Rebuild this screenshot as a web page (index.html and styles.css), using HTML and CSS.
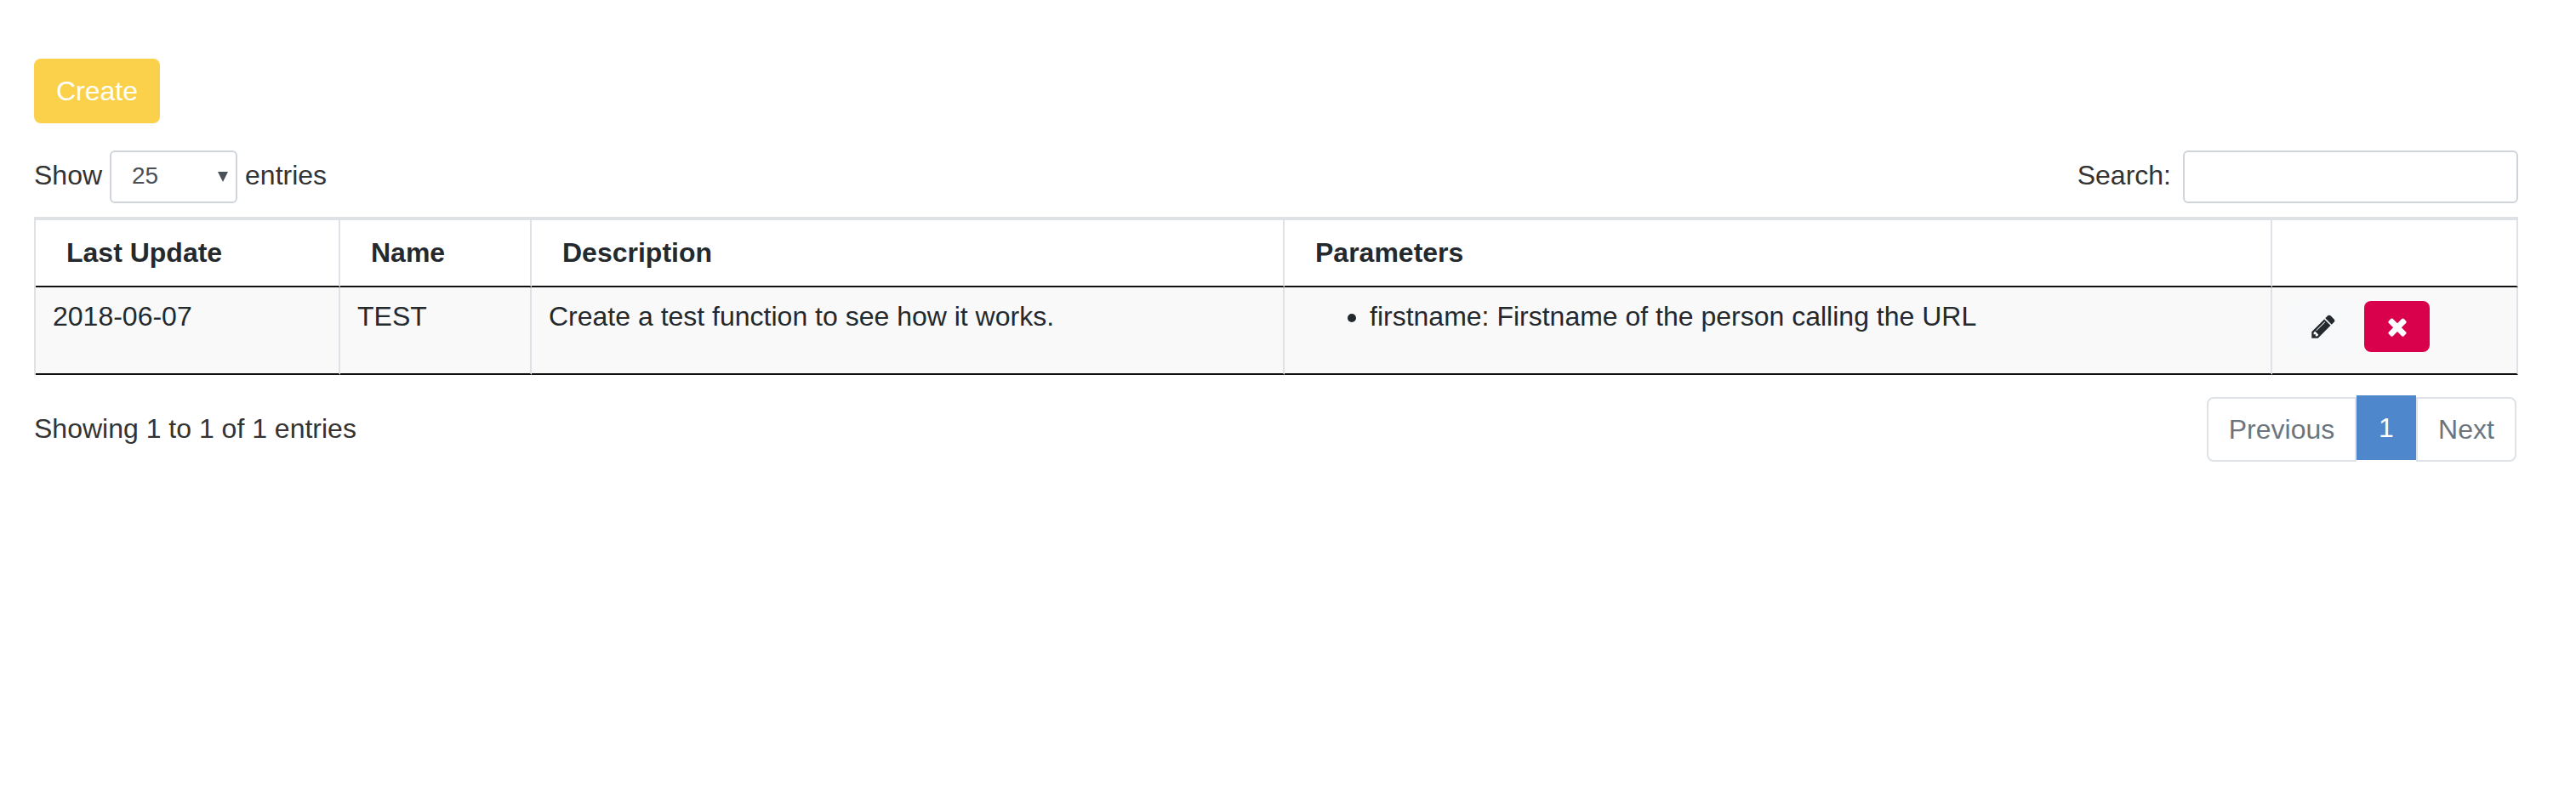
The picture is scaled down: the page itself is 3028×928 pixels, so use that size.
FILE: index.html
```html
<!DOCTYPE html>
<html lang="en">
<head>
<meta charset="utf-8">
<title>Functions</title>
<link rel="stylesheet" href="styles.css">
</head>
<body>
<main class="page">
  <button class="btn btn-create" type="button">Create</button>
  <div class="toolbar">
    <label class="length">Show
      <span class="select">25<svg class="caret" viewBox="0 0 12 12"><path d="M0 0h12L6 12z"/></svg></span>
      entries</label>
    <label class="search">Search:<input class="search-input" type="text"></label>
  </div>
  <table class="grid">
    <colgroup><col class="c-date"><col class="c-name"><col class="c-desc"><col class="c-params"><col class="c-actions"></colgroup>
    <thead>
      <tr><th>Last Update</th><th>Name</th><th>Description</th><th>Parameters</th><th></th></tr>
    </thead>
    <tbody>
      <tr>
        <td>2018-06-07</td>
        <td>TEST</td>
        <td>Create a test function to see how it works.</td>
        <td><ul class="params"><li>firstname: Firstname of the person calling the URL</li></ul></td>
        <td>
          <div class="actions">
            <button class="btn-icon btn-edit" type="button" aria-label="Edit"><svg class="icon" viewBox="0 0 1792 1792"><path d="M491 1536l91-91-235-235-91 91v107h128v128h107zm523-928q0-22-22-22-10 0-17 7l-542 542q-7 7-7 17 0 22 22 22 10 0 17-7l542-542q7-7 7-17zm-54-192l416 416-832 832h-416v-416zm683 96q0 53-37 90l-166 166-416-416 166-165q36-38 90-38 53 0 91 38l235 234q37 39 37 91z"/></svg></button>
            <button class="btn-icon btn-delete" type="button" aria-label="Delete"><svg class="icon" viewBox="0 0 1792 1792"><path d="M1490 1322q0 40-28 68l-136 136q-28 28-68 28t-68-28l-294-294-294 294q-28 28-68 28t-68-28l-136-136q-28-28-28-68t28-68l294-294-294-294q-28-28-28-68t28-68l136-136q28-28 68-28t68 28l294 294 294-294q28-28 68-28t68 28l136 136q28 28 28 68t-28 68l-294 294 294 294q28 28 28 68z"/></svg></button>
          </div>
        </td>
      </tr>
    </tbody>
  </table>
  <div class="footer">
    <div class="info">Showing 1 to 1 of 1 entries</div>
    <nav class="pagination">
      <a class="page-link prev">Previous</a><a class="page-link current">1</a><a class="page-link next">Next</a>
    </nav>
  </div>
</main>
</body>
</html>
```
FILE: styles.css
```css
* { box-sizing: border-box; }
body {
  margin: 0;
  background: #fff;
  color: #24292e;
  font: 32px/48px "Liberation Sans", Arial, sans-serif;
}
.page { padding: 69px 68px 0 40px; }
.btn {
  display: block;
  height: 76px;
  padding: 0 26px;
  border: 0;
  border-radius: 8px;
  font: inherit;
}
.btn-create { background: #fbd14b; color: #fff; }
.toolbar {
  display: flex;
  justify-content: space-between;
  height: 62px;
  margin-top: 32px;
  color: #333;
}
.length, .search { display: flex; align-items: flex-start; line-height: 58px; }
.length { gap: 9px; }
.select {
  display: flex;
  align-items: center;
  justify-content: space-between;
  width: 150px;
  height: 62px;
  padding: 0 9px 2px 24px;
  border: 2px solid #ced4da;
  border-radius: 6px;
  color: #495057;
  font-size: 28px;
  line-height: 56px;
}
.caret { width: 12px; height: 12px; margin-top: 2px; fill: #495057; }
.search { gap: 14px; }
.search-input {
  width: 394px;
  height: 62px;
  margin: 0;
  border: 2px solid #ced4da;
  border-radius: 6px;
  background: #fff;
}
.grid {
  width: 2920px;
  margin-top: 16px;
  table-layout: fixed;
  border-collapse: separate;
  border-spacing: 0;
  border-left: 2px solid #dee2e6;
}
.c-date { width: 358px; }
.c-name { width: 225px; }
.c-desc { width: 885px; }
.c-params { width: 1161px; }
.c-actions { width: 289px; }
.grid th, .grid td {
  border-right: 2px solid #dee2e6;
  text-align: left;
  vertical-align: top;
}
.grid th {
  height: 83px;
  padding: 14px 36px 0;
  border-top: 4px solid #dee2e6;
  border-bottom: 2px solid #111;
}
.grid td {
  height: 103px;
  padding: 10px 20px 0;
  border-bottom: 2px solid #111;
  background: #f9f9f9;
}
.params { margin: 0; padding: 0 0 0 80px; }
.actions { display: flex; gap: 10px; padding-top: 6px; }
.btn-icon {
  display: flex;
  align-items: center;
  justify-content: center;
  width: 77px;
  height: 60px;
  padding: 0;
  border: 0;
  border-radius: 8px;
}
.btn-edit { background: #f8f9fa; color: #24292e; margin-left: 1px; }
.btn-delete { background: #d9004c; color: #fff; }
.icon { width: 32px; height: 32px; fill: currentColor; }
.footer {
  display: flex;
  justify-content: space-between;
  padding: 24px 2px 0 0;
}
.info { padding-top: 15px; color: #333; }
.pagination { display: flex; }
.page-link {
  height: 76px;
  margin-top: 2px;
  border: 2px solid #dee2e6;
  color: #6c757d;
  line-height: 72px;
  text-align: center;
}
.prev { width: 176px; border-radius: 8px 0 0 8px; }
.current { width: 70px; margin-top: 0; border-color: #4e87cb; background: #4e87cb; color: #fff; }
.next { width: 118px; border-radius: 0 8px 8px 0; }
```
